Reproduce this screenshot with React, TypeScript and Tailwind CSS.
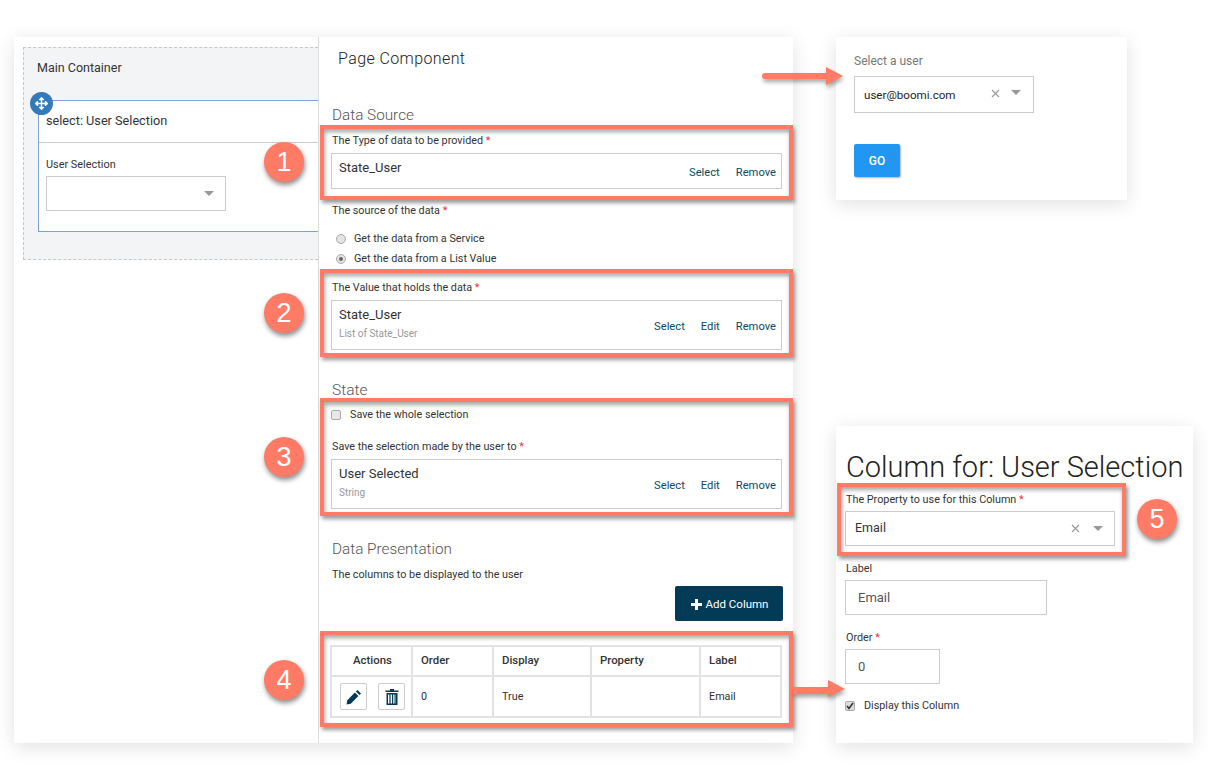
import { ReactNode } from 'react';
import { FaArrowsAlt } from 'react-icons/fa';

const shadowFrame =
  'border-4 border-[#ff7b66] shadow-[2px_3px_4px_rgba(0,0,0,0.4),inset_1px_3px_4px_rgba(0,0,0,0.35)]';
const cardShadow = 'shadow-[0_4px_18px_rgba(0,0,0,0.12)]';

function Required({ children }: { children: ReactNode }) {
  return (
    <>
      {children} <span className="text-[#e8304f]">*</span>
    </>
  );
}

function Caret() {
  return <span className="block w-0 h-0 border-x-[5px] border-t-[5px] border-x-transparent border-t-[#999]" />;
}

function ClearIcon() {
  return (
    <svg width="9" height="9" viewBox="0 0 9 9" className="block">
      <path d="M1 1l7 7M8 1L1 8" stroke="#999" strokeWidth="1.1" fill="none" />
    </svg>
  );
}

function ValueField({ title, sub, actions }: { title: string; sub?: string; actions: string[] }) {
  return (
    <div className={`border border-[#ccc] flex justify-between pl-[7px] pr-[5px] ${sub ? 'h-[50px]' : 'h-[36px]'}`}>
      <div className="pt-[4px]">
        <div className="text-[13px] leading-[20px] text-[#333]">{title}</div>
        {sub && <div className="text-[10px] leading-[16px] mt-[1px] text-[#999]">{sub}</div>}
      </div>
      <div className={`flex gap-[16px] text-[11.2px] leading-[16px] text-[#0b4a66] ${sub ? 'pt-[18px]' : 'pt-[11px]'}`}>
        {actions.map((a) => (
          <span key={a}>{a}</span>
        ))}
      </div>
    </div>
  );
}

function Badge({ n, className }: { n: number; className: string }) {
  return (
    <div
      className={`absolute w-[40px] h-[40px] rounded-full bg-[#ff7b66] text-white text-[27px] font-['Liberation_Sans',sans-serif] flex items-center justify-center shadow-[1px_3px_5px_rgba(0,0,0,0.45)] ${className}`}
    >
      {n}
    </div>
  );
}

export default function App() {
  return (
    <div className="relative w-[1208px] h-[769px] overflow-hidden bg-white pt-[37px] pl-[14px] flex gap-[43px] font-['Roboto','Liberation_Sans',sans-serif] text-[#333]">
      {/* page builder card */}
      <div className={`w-[779px] h-[706px] flex bg-white shrink-0 ${cardShadow}`}>
        <div className="w-[304px] shrink-0 pt-[10px] pl-[9px]">
          <div className="h-[213px] bg-[#f3f4f6] border border-r-0 border-dashed border-[#c8c8c8] pl-[14px]">
            <div className="h-[52px] pt-[10px] text-[12.5px] leading-[20px] -ml-px">Main Container</div>
            <div className="relative h-[132px] bg-white border border-r-0 border-[#7e9fe0]">
              <span className="absolute -left-[9px] -top-[9px] w-[23px] h-[23px] rounded-full bg-[#337ab7] text-white flex items-center justify-center">
                <FaArrowsAlt size={13} />
              </span>
              <div className="h-[42px] border-b border-[#ccc] pl-[7px] pb-[2px] flex items-center text-[12.7px]">select: User Selection</div>
              <div className="pl-[7px]">
                <div className="h-[33px] pt-[14px] text-[10.9px] leading-[16px]">User Selection</div>
                <div className="w-[180px] h-[35px] border border-[#ccc] flex items-center justify-end pr-[11px]">
                  <Caret />
                </div>
              </div>
            </div>
          </div>
        </div>

        {/* page component panel */}
        <div className="w-[475px] border-l border-[#ddd] pl-px text-[10.8px]">
          <div className="h-[22px] mt-[11px] ml-[18px] text-[16px] leading-[22px] tracking-[0.4px] font-light text-[#222]">Page Component</div>
          <div className="h-[20px] mt-[35px] ml-[12px] text-[15.3px] leading-[20px] font-light text-[#555]">Data Source</div>

          <div className={`h-[75px] pl-[7px] pr-[7px] ${shadowFrame}`}>
            <div className="h-[24px] pt-[4px] pl-px leading-[16px]"><Required>The Type of data to be provided</Required></div>
            <ValueField title="State_User" actions={['Select', 'Remove']} />
          </div>

          <div className="h-[18px] mt-[1px] ml-[12px] leading-[20px]"><Required>The source of the data</Required></div>
          <div className="mt-[10px] ml-[16px]">
            <div className="h-[20px] flex items-center gap-[8px]">
              <span className="w-[10px] h-[10px] rounded-full border border-[#aaa] bg-[#e4e4e4]" />
              Get the data from a Service
            </div>
            <div className="h-[20px] flex items-center gap-[8px]">
              <span className="w-[10px] h-[10px] rounded-full border border-[#aaa] bg-[#e4e4e4] flex items-center justify-center">
                <span className="w-[4px] h-[4px] rounded-full bg-[#666]" />
              </span>
              Get the data from a List Value
            </div>
          </div>

          <div className={`h-[88px] pl-[7px] pr-[7px] ${shadowFrame}`}>
            <div className="h-[27px] pt-[7px] pl-px leading-[16px]"><Required>The Value that holds the data</Required></div>
            <ValueField title="State_User" sub="List of State_User" actions={['Select', 'Edit', 'Remove']} />
          </div>

          <div className="h-[19px] mt-[22px] ml-[12px] text-[15.5px] leading-[22px] font-light text-[#555]">State</div>

          <div className={`h-[118px] pl-[7px] pr-[7px] ${shadowFrame}`}>
            <div className="h-[24px] pt-[2px] flex items-center gap-[9px]">
              <span className="w-[10px] h-[10px] rounded-[2px] border border-[#aaa] bg-[#e8e8e8]" />
              Save the whole selection
            </div>
            <div className="h-[20px] mt-[10px] pl-px leading-[22px]"><Required>Save the selection made by the user to</Required></div>
            <div className="mt-[3px]">
              <ValueField title="User Selected" sub="String" actions={['Select', 'Edit', 'Remove']} />
            </div>
          </div>

          <div className="h-[22px] mt-[22px] ml-[12px] text-[15.3px] leading-[22px] font-light text-[#555]">Data Presentation</div>
          <div className="h-[20px] mt-[4px] ml-[12px] leading-[22px]">The columns to be displayed to the user</div>
          <div className="flex justify-end pr-[10px] mt-[2px]">
            <div className="w-[108px] h-[35px] pt-[2px] pl-px bg-[#033b57] rounded-[2px] text-white text-[11.5px] flex items-center justify-center gap-[4px]">
              <svg width="11" height="11" viewBox="0 0 11 11">
                <path d="M4 0h3v4h4v3H7v4H4V7H0V4h4z" fill="#fff" />
              </svg>
              Add Column
            </div>
          </div>

          <div className={`h-[96px] mt-[10px] pl-[6px] pt-[10px] ${shadowFrame}`}>
            <table className="w-[452px] h-[73px] table-fixed border-collapse text-[10.8px]">
              <thead>
                <tr className="h-[30px] text-[11.4px]">
                  <th className="w-[81px] border-2 border-[#e2e2e2] font-medium text-center pl-[2px]">Actions</th>
                  <th className="w-[81px] border-2 border-[#e2e2e2] font-medium text-left pl-[8px]">Order</th>
                  <th className="w-[98px] border-2 border-[#e2e2e2] font-medium text-left pl-[8px]">Display</th>
                  <th className="w-[109px] border-2 border-[#e2e2e2] font-medium text-left pl-[8px]">Property</th>
                  <th className="border-2 border-[#e2e2e2] font-medium text-left pl-[8px]">Label</th>
                </tr>
              </thead>
              <tbody>
                <tr>
                  <td className="border-2 border-[#e2e2e2] pl-[2px]">
                    <div className="flex justify-center gap-[11px]">
                      <span className="w-[27px] h-[27px] rounded-[2px] border border-[#ccc] flex items-center justify-center">
                        <svg width="16" height="16" viewBox="0 0 16 16">
                          <path d="M11.5 1l3.5 3.5-1.6 1.6-3.5-3.5zM8.9 3.6l3.5 3.5-7.6 7.6L.5 15.5l.8-4.3z" fill="#033b57" />
                        </svg>
                      </span>
                      <span className="w-[27px] h-[27px] rounded-[2px] border border-[#ccc] flex items-center justify-center">
                        <svg width="14" height="16" viewBox="0 0 14 16">
                          <path d="M5 0h4v1.5h4.5V3H.5V1.5H5z" fill="#033b57" />
                          <path d="M1.5 4h11v12h-11zM3 5.5v9h1.4v-9zm2.6 0v9H7v-9zm2.6 0v9h1.3v-9zm2.5 0v9H11v-9z" fill="#033b57" fillRule="evenodd" />
                        </svg>
                      </span>
                    </div>
                  </td>
                  <td className="border-2 border-[#e2e2e2] pl-[8px] pt-[2px]">0</td>
                  <td className="border-2 border-[#e2e2e2] pl-[8px] pt-[2px]">True</td>
                  <td className="border-2 border-[#e2e2e2] pl-[8px]" />
                  <td className="border-2 border-[#e2e2e2] pl-[8px] pt-[2px]">Email</td>
                </tr>
              </tbody>
            </table>
          </div>
        </div>
      </div>

      {/* preview + column form */}
      <div className="flex flex-col gap-[226px]">
        <div className={`w-[291px] h-[163px] bg-white pt-[15px] pl-[18px] ${cardShadow}`}>
          <div className="h-[24px] text-[12px] leading-[18px] text-[#777]">Select a user</div>
          <div className="w-[180px] h-[37px] border border-[#ccc] flex items-center pl-[9px] pr-[12px] text-[11.6px]">
            <span className="flex-1 pt-[2px] text-[#222]">user@boomi.com</span>
            <span className="mr-[11px] -mt-[2px]"><ClearIcon /></span>
            <span className="-mt-[4px]"><Caret /></span>
          </div>
          <div className="mt-[31px] w-[46px] h-[33px] rounded-[2px] bg-[#2196f3] text-white text-[12px] font-medium flex items-center justify-center shadow-[1px_1px_2px_rgba(0,0,0,0.3)]">
            GO
          </div>
        </div>

        <div className={`w-[357px] h-[317px] bg-white pt-[22px] ${cardShadow}`}>
          <div className="h-[35px] pl-[10px] text-[29px] leading-[38px] font-light text-[#222] whitespace-nowrap">Column for: User Selection</div>
          <div className={`w-[289px] h-[73px] ml-px pl-[4px] pr-[7px] text-[10.8px] ${shadowFrame}`}>
            <div className="h-[24px] pt-[5px] pl-px leading-[16px]"><Required>The Property to use for this Column</Required></div>
            <div className="h-[35px] border border-[#ccc] flex items-center pl-[9px] pr-[11px] text-[12.5px]">
              <span className="flex-1">Email</span>
              <span className="mr-[13px]"><ClearIcon /></span>
              <Caret />
            </div>
          </div>
          <div className="pl-[9px] text-[10.8px]">
            <div className="h-[24px] pt-[5px] pl-px leading-[16px]">Label</div>
            <div className="w-[202px] h-[35px] border border-[#ccc] flex items-center pl-[12px] text-[13px] text-[#555]">Email</div>
            <div className="h-[34px] pt-[15px] pl-px leading-[16px]"><Required>Order</Required></div>
            <div className="w-[95px] h-[35px] border border-[#ccc] flex items-center pl-[12px] text-[13px] text-[#555]">0</div>
            <div className="h-[20px] mt-[11px] pt-[2px] flex items-center gap-[9px]">
              <span className="w-[10px] h-[10px] rounded-[2px] border border-[#aaa] bg-[#ddd] flex items-center justify-center">
                <svg width="8" height="8" viewBox="0 0 8 8">
                  <path d="M1 4l2 2.5L7 1" stroke="#333" strokeWidth="1.6" fill="none" />
                </svg>
              </span>
              Display this Column
            </div>
          </div>
        </div>
      </div>

      {/* callouts */}
      <Badge n={1} className="left-[264px] top-[142px]" />
      <Badge n={2} className="left-[264px] top-[293px]" />
      <Badge n={3} className="left-[264px] top-[437px]" />
      <Badge n={4} className="left-[264px] top-[660px]" />
      <Badge n={5} className="left-[1137px] top-[499px]" />

      <svg width="90" height="26" viewBox="0 0 90 26" className="absolute left-[760px] top-[64px] drop-shadow-[1px_3px_2px_rgba(0,0,0,0.35)]">
        <path d="M5 9h61V3l17 9-17 9v-6H5a3 3 0 0 1 0-6z" fill="#ff7b66" />
      </svg>
      <svg width="54" height="20" viewBox="0 0 54 20" className="absolute left-[793px] top-[679px] drop-shadow-[1px_3px_2px_rgba(0,0,0,0.35)]">
        <path d="M0 8h35V1l17 9-17 8v-3H0z" fill="#ff7b66" />
      </svg>
    </div>
  );
}
